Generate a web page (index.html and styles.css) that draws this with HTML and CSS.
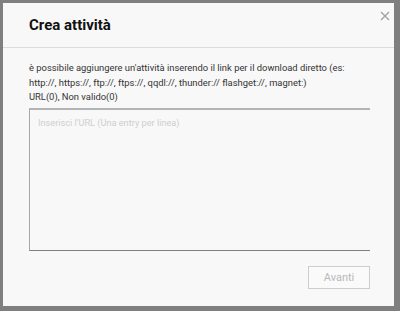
FILE: index.html
```html
<!DOCTYPE html>
<html>
<head>
<meta charset="utf-8">
<link rel="stylesheet" href="styles.css">
</head>
<body>
<div class="dialog">
  <div class="header">
    <h1 class="title">Crea attività</h1>
    <span class="close"><svg width="10" height="10" viewBox="0 0 10 10"><path d="M1 1L9 9M9 1L1 9" stroke="#a0a0a0" stroke-width="1.3" fill="none"/></svg></span>
  </div>
  <div class="content">
    <p class="desc">è possibile aggiungere un'attività inserendo il link per il download diretto (es: http://, https://, ftp://, ftps://, qqdl://, thunder:// flashget://, magnet:)<br>URL(0), Non valido(0)</p>
    <div class="area"><span class="placeholder">Inserisci l'URL (Una entry per linea)</span></div>
    <div class="footer"><button class="btn">Avanti</button></div>
  </div>
</div>
</body>
</html>
```
FILE: styles.css
```css
html, body { margin: 0; padding: 0; }
body {
  background: #7f7f7f;
  width: 400px;
  height: 311px;
  overflow: hidden;
  font-family: Roboto, "Liberation Sans", sans-serif;
}
.dialog {
  margin: 3px 6px 0 3px;
  height: 303px;
  background: #f8f8f8;
  box-sizing: border-box;
}
.header {
  height: 45px;
  border-bottom: 1px solid #dcdcdc;
  position: relative;
  box-sizing: border-box;
  padding: 12px 0 0 26px;
}
.title {
  margin: 0;
  font-size: 15px;
  font-weight: bold;
  color: #111;
  line-height: 20px;
}
.close {
  position: absolute;
  right: 4px;
  top: 8px;
  width: 10px;
  height: 10px;
  display: block;
}
.close svg { display: block; }
.content {
  padding: 13px 24px 0 26px;
}
.desc {
  margin: 0;
  max-width: 318px;
  font-size: 9.4px;
  line-height: 14.5px;
  color: #333;
}
.area {
  margin-top: 3px;
  height: 143px;
  border-top: 2px solid #b4b4b4;
  border-left: 1px solid #a8a8a8;
  border-bottom: 1px solid #808080;
  box-sizing: border-box;
  padding: 7px 0 0 8px;
}
.placeholder {
  display: block;
  font-size: 9.2px;
  line-height: 12px;
  color: #cfcfcf;
}
.footer {
  display: flex;
  justify-content: flex-end;
  padding-top: 15px;
}
.btn {
  width: 62px;
  height: 23px;
  border: 1px solid #cdcdcd;
  background: #fafafa;
  color: #b8b8b8;
  font-family: Roboto, "Liberation Sans", sans-serif;
  font-size: 11px;
  padding: 0;
}
```
